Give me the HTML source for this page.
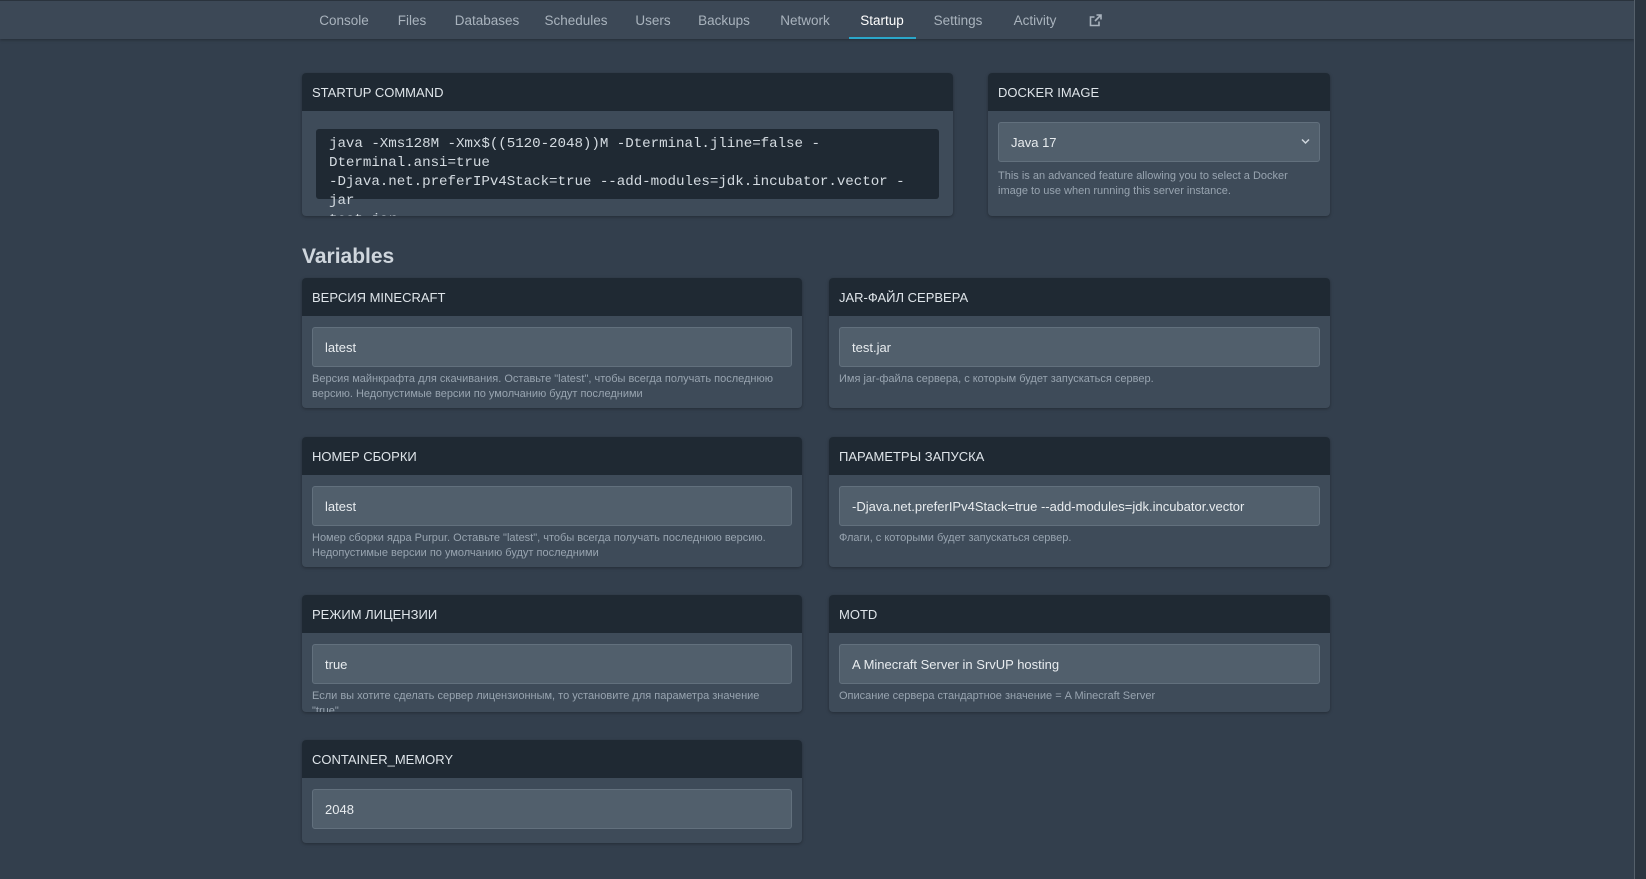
<!DOCTYPE html>
<html><head><meta charset="utf-8"><style>
*{box-sizing:border-box;margin:0;padding:0}
body{width:1646px;height:879px;background:#333f4d;font-family:"Liberation Sans","Noto Sans CJK SC",sans-serif;color:#cfd6dd;position:relative;overflow:hidden}
.nav{position:absolute;left:0;top:0;width:1634px;height:39px;background:#3c4856;box-shadow:0 1px 3px rgba(0,0,0,.3);border-top:1px solid #2a333d}
.tab{position:absolute;top:12px;font-size:13.5px;color:#a9b3bd;transform:translateX(-50%);white-space:nowrap}
.tab.act{color:#fff}
.ul{position:absolute;left:849px;width:67px;top:36px;height:2px;background:#2aa6c9}
.sb{position:absolute;left:1634px;top:0;width:12px;height:879px;background:#2b3540;border-left:1px solid #55606b}
.card{position:absolute;background:#3e4b59;border-radius:4px;box-shadow:0 1px 3px rgba(0,0,0,.3);overflow:hidden}
.hd{height:38px;background:#1f2933;font-size:13px;color:#dfe5ea;padding:12px 10px;white-space:nowrap}
.inp{position:absolute;background:#515f6c;border:1px solid #62707d;border-radius:3px;font-size:13px;color:#e8ecef;padding:0 12px;display:flex;align-items:center;height:40px}
.desc{position:absolute;font-size:11px;color:#98a4b0;line-height:14.5px}
.code{position:absolute;left:14px;top:56px;width:623px;height:70px;background:#1f2933;border-radius:3px;font-family:"Liberation Mono",monospace;font-size:14.2px;line-height:19px;color:#d4dbe1;padding:6px 13px;letter-spacing:-.05px}
h2{position:absolute;left:302px;top:245px;font-size:21px;font-weight:bold;color:#cfd6dd}
</style></head><body>
<div class="nav">
<span class="tab" style="left:344px">Console</span>
<span class="tab" style="left:412px">Files</span>
<span class="tab" style="left:487px">Databases</span>
<span class="tab" style="left:576px">Schedules</span>
<span class="tab" style="left:653px">Users</span>
<span class="tab" style="left:724px">Backups</span>
<span class="tab" style="left:805px">Network</span>
<span class="tab act" style="left:882px">Startup</span>
<span class="tab" style="left:958px">Settings</span>
<span class="tab" style="left:1035px">Activity</span>
<svg style="position:absolute;left:1089px;top:13px" width="13" height="13" viewBox="0 0 13 13" fill="none" stroke="#a9b3bd" stroke-width="1.6"><path d="M10 7.5V11.5H1.5V3H5.5"/><path d="M7.5 1H12V5.5M12 1L6 7"/></svg>
<div class="ul"></div>
</div>
<div class="sb"></div>

<div class="card" style="left:302px;top:73px;width:651px;height:143px">
<div class="hd">STARTUP COMMAND</div>
<div class="code">java -Xms128M -Xmx$((5120-2048))M -Dterminal.jline=false -Dterminal.ansi=true<br>-Djava.net.preferIPv4Stack=true --add-modules=jdk.incubator.vector -jar<br>test.jar</div>
</div>

<div class="card" style="left:988px;top:73px;width:342px;height:143px">
<div class="hd">DOCKER IMAGE</div>
<div class="inp" style="left:10px;top:49px;width:322px">Java 17</div>
<svg style="position:absolute;left:313px;top:65px" width="9" height="7" viewBox="0 0 9 7" fill="none" stroke="#cfd6dd" stroke-width="1.5"><path d="M1 1.5L4.5 5L8 1.5"/></svg>
<div class="desc" style="left:10px;top:96px;width:322px">This is an advanced feature allowing you to select a Docker image to use when running this server instance.</div>
</div>

<h2>Variables</h2>

<div class="card" style="left:302px;top:278px;width:500px;height:130px">
<div class="hd">ВЕРСИЯ MINECRAFT</div>
<div class="inp" style="left:10px;top:49px;width:480px">latest</div>
<div class="desc" style="left:10px;top:94px;width:480px">Версия майнкрафта для скачивания. Оставьте "latest", чтобы всегда получать последнюю версию. Недопустимые версии по умолчанию будут последними</div>
</div>
<div class="card" style="left:829px;top:278px;width:501px;height:130px">
<div class="hd">JAR-ФАЙЛ СЕРВЕРА</div>
<div class="inp" style="left:10px;top:49px;width:481px">test.jar</div>
<div class="desc" style="left:10px;top:94px;width:481px">Имя jar-файла сервера, с которым будет запускаться сервер.</div>
</div>

<div class="card" style="left:302px;top:437px;width:500px;height:130px">
<div class="hd">НОМЕР СБОРКИ</div>
<div class="inp" style="left:10px;top:49px;width:480px">latest</div>
<div class="desc" style="left:10px;top:94px;width:480px">Номер сборки ядра Purpur. Оставьте "latest", чтобы всегда получать последнюю версию. Недопустимые версии по умолчанию будут последними</div>
</div>
<div class="card" style="left:829px;top:437px;width:501px;height:130px">
<div class="hd">ПАРАМЕТРЫ ЗАПУСКА</div>
<div class="inp" style="left:10px;top:49px;width:481px">-Djava.net.preferIPv4Stack=true --add-modules=jdk.incubator.vector</div>
<div class="desc" style="left:10px;top:94px;width:481px">Флаги, с которыми будет запускаться сервер.</div>
</div>

<div class="card" style="left:302px;top:595px;width:500px;height:117px">
<div class="hd">РЕЖИМ ЛИЦЕНЗИИ</div>
<div class="inp" style="left:10px;top:49px;width:480px">true</div>
<div class="desc" style="left:10px;top:94px;width:480px">Если вы хотите сделать сервер лицензионным, то установите для параметра значение "true".</div>
</div>
<div class="card" style="left:829px;top:595px;width:501px;height:117px">
<div class="hd">MOTD</div>
<div class="inp" style="left:10px;top:49px;width:481px">A Minecraft Server in SrvUP hosting</div>
<div class="desc" style="left:10px;top:94px;width:481px">Описание сервера стандартное значение = A Minecraft Server</div>
</div>

<div class="card" style="left:302px;top:740px;width:500px;height:103px">
<div class="hd">CONTAINER_MEMORY</div>
<div class="inp" style="left:10px;top:49px;width:480px">2048</div>
</div>
</body></html>
